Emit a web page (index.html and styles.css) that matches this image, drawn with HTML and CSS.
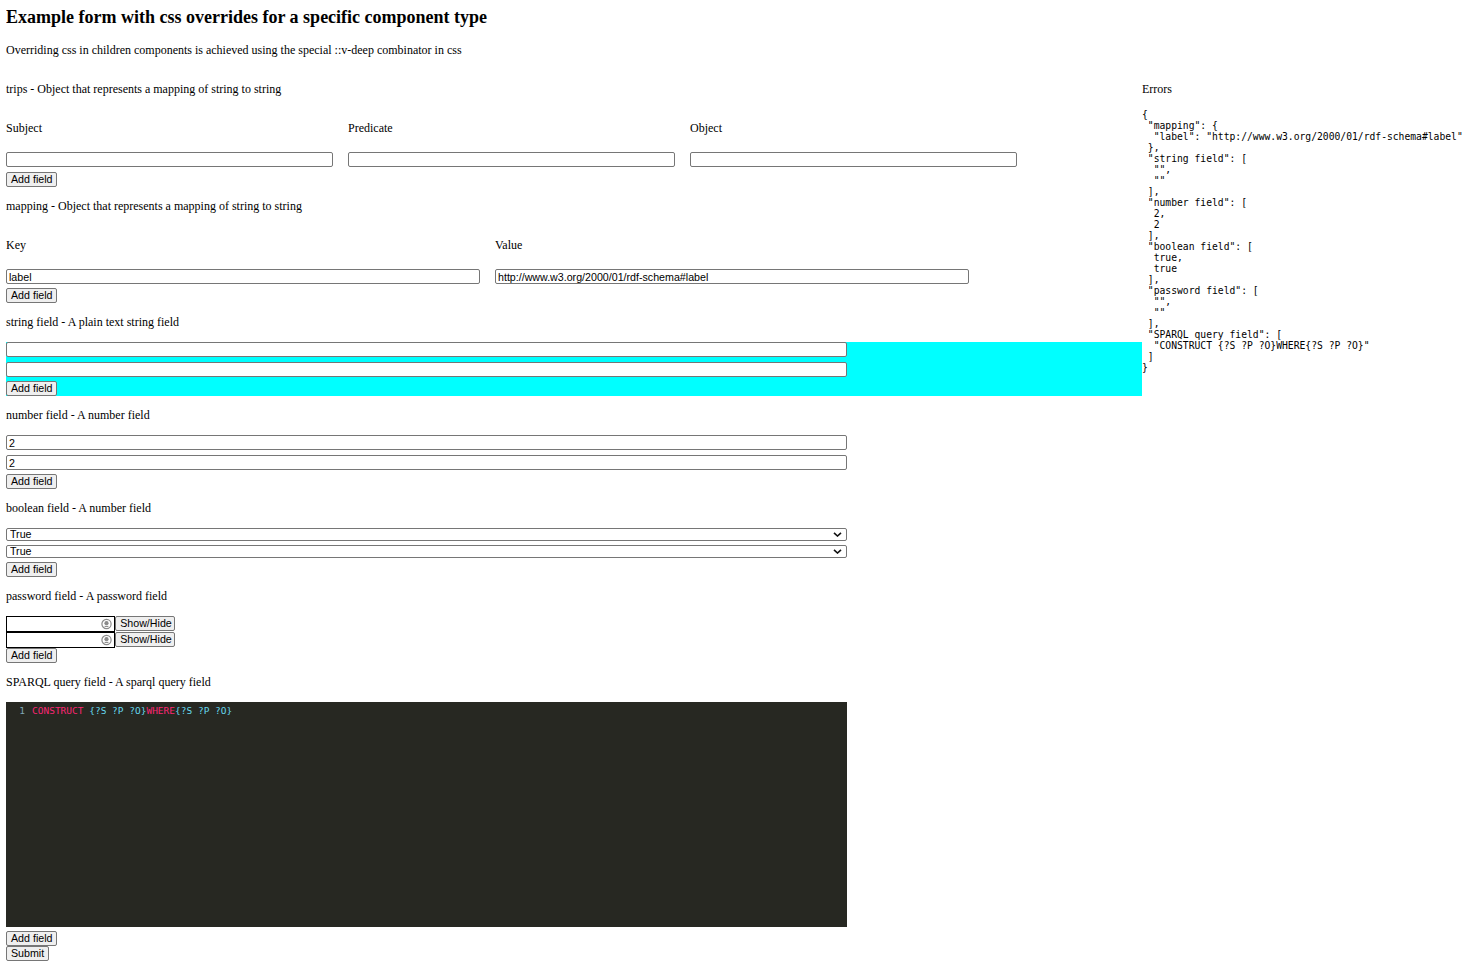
FILE: index.html
```html
<!DOCTYPE html>
<html lang="en">
<head>
<meta charset="utf-8">
<title>Example form</title>
<link rel="stylesheet" href="styles.css">
</head>
<body>
<h2 class="title">Example form with css overrides for a specific component type</h2>
<p class="intro">Overriding css in children components is achieved using the special ::v-deep combinator in css</p>
<div class="layout">
  <form class="form">
    <section class="field">
      <p class="label">trips - Object that represents a mapping of string to string</p>
      <div class="cols cols-3">
        <div class="col"><p class="col-label">Subject</p><input class="input" type="text"></div>
        <div class="col"><p class="col-label">Predicate</p><input class="input" type="text"></div>
        <div class="col"><p class="col-label">Object</p><input class="input" type="text"></div>
      </div>
      <button type="button" class="btn btn-after-cols">Add field</button>
    </section>

    <section class="field">
      <p class="label">mapping - Object that represents a mapping of string to string</p>
      <div class="cols cols-2">
        <div class="col"><p class="col-label">Key</p><input class="input" type="text" value="label"></div>
        <div class="col"><p class="col-label">Value</p><input class="input" type="text" value="http://www.w3.org/2000/01/rdf-schema#label"></div>
      </div>
      <button type="button" class="btn">Add field</button>
    </section>

    <section class="field">
      <p class="label">string field - A plain text string field</p>
      <div class="highlight">
        <div class="stack">
          <input class="input" type="text">
          <input class="input" type="text">
        </div>
        <button type="button" class="btn">Add field</button>
      </div>
    </section>

    <section class="field">
      <p class="label">number field - A number field</p>
      <div class="stack">
        <input class="input" type="text" value="2">
        <input class="input" type="text" value="2">
      </div>
      <button type="button" class="btn">Add field</button>
    </section>

    <section class="field">
      <p class="label">boolean field - A number field</p>
      <div class="stack stack-select">
        <div class="select-wrap">
          <select class="select"><option>True</option><option>False</option></select>
          <svg class="chevron" width="9" height="5" viewBox="0 0 9 5"><path d="M1 0.8 L4.5 4 L8 0.8" fill="none" stroke="#111" stroke-width="1.6"/></svg>
        </div>
        <div class="select-wrap">
          <select class="select"><option>True</option><option>False</option></select>
          <svg class="chevron" width="9" height="5" viewBox="0 0 9 5"><path d="M1 0.8 L4.5 4 L8 0.8" fill="none" stroke="#111" stroke-width="1.6"/></svg>
        </div>
      </div>
      <button type="button" class="btn">Add field</button>
    </section>

    <section class="field">
      <p class="label">password field - A password field</p>
      <div class="pw-list">
        <div class="pw-row">
          <div class="pw-box">
            <input class="pw-input" type="password">
            <svg class="reveal" width="11" height="12" viewBox="0 0 11 12"><circle cx="5.5" cy="6" r="4.6" fill="none" stroke="#8a8a8a" stroke-width="1.2"/><circle cx="5.5" cy="5.2" r="2.1" fill="#8a8a8a"/><path d="M3.6 8.4 H7.4" stroke="#8a8a8a" stroke-width="1.1"/></svg>
          </div>
          <button type="button" class="btn btn-inline">Show/Hide</button>
        </div>
        <div class="pw-row">
          <div class="pw-box">
            <input class="pw-input" type="password">
            <svg class="reveal" width="11" height="12" viewBox="0 0 11 12"><circle cx="5.5" cy="6" r="4.6" fill="none" stroke="#8a8a8a" stroke-width="1.2"/><circle cx="5.5" cy="5.2" r="2.1" fill="#8a8a8a"/><path d="M3.6 8.4 H7.4" stroke="#8a8a8a" stroke-width="1.1"/></svg>
          </div>
          <button type="button" class="btn btn-inline">Show/Hide</button>
        </div>
      </div>
      <button type="button" class="btn btn-flush">Add field</button>
    </section>

    <section class="field">
      <p class="label">SPARQL query field - A sparql query field</p>
      <div class="editor">
        <div class="gutter">1</div>
        <div class="code"><span class="kw">CONSTRUCT</span> <span class="var">{?S ?P ?O}</span><span class="kw">WHERE</span><span class="var">{?S ?P ?O}</span></div>
      </div>
      <button type="button" class="btn">Add field</button>
      <button type="submit" class="btn btn-flush">Submit</button>
    </section>
  </form>

  <aside class="side">
    <p class="label">Errors</p>
    <pre class="errors">{
 "mapping": {
  "label": "http://www.w3.org/2000/01/rdf-schema#label"
 },
 "string field": [
  "",
  ""
 ],
 "number field": [
  2,
  2
 ],
 "boolean field": [
  true,
  true
 ],
 "password field": [
  "",
  ""
 ],
 "SPARQL query field": [
  "CONSTRUCT {?S ?P ?O}WHERE{?S ?P ?O}"
 ]
}</pre>
  </aside>
</div>
</body>
</html>
```

FILE: styles.css
```css
* {
  box-sizing: border-box;
}

html {
  background: #fff;
}

body {
  margin: 6px 6px 0;
  font-family: "Liberation Serif", "Times New Roman", serif;
  font-size: 12px;
  color: #000;
}

.title {
  font-size: 18px;
  font-weight: bold;
  line-height: 22px;
  margin: 0 0 15px;
}

.intro {
  margin: 0 0 12px;
  line-height: 15px;
}

.layout {
  display: flex;
  align-items: flex-start;
}

.form {
  width: 1136px;
  flex: none;
}

.side {
  flex: 1;
  min-width: 0;
}

.label {
  margin: 12px 0;
  line-height: 15px;
}

.cols {
  display: flex;
  gap: 15px;
}

.col {
  display: flex;
  flex-direction: column;
}

.cols-3 .col {
  width: 327px;
}

.cols-2 .col {
  width: 474px;
}

.col-label {
  margin: 12px 0 16px;
  line-height: 15px;
}

.input {
  display: block;
  width: 100%;
  height: 15px;
  margin: 0;
  padding: 0 2px;
  border: 1px solid #767676;
  border-radius: 2px;
  background: #fff;
  color: #000;
  font-family: "Liberation Sans", Arial, sans-serif;
  font-size: 10.67px;
}

.stack {
  display: flex;
  flex-direction: column;
  gap: 5px;
  width: 841px;
}

.stack-select {
  gap: 4px;
}

.highlight {
  background: #00ffff;
}

.btn {
  display: block;
  height: 15px;
  margin: 4px 0 0;
  padding: 0 4px;
  border: 1px solid #767676;
  border-radius: 2px;
  background: #efefef;
  color: #000;
  font-family: "Liberation Sans", Arial, sans-serif;
  font-size: 10.67px;
  line-height: 13px;
}

.btn-after-cols {
  margin-top: 5px;
}

.btn-flush {
  margin-top: 0;
}

.btn-inline {
  margin: 0;
  width: 60px;
  padding: 0 0 0 2px;
  text-align: center;
}

.select-wrap {
  position: relative;
  width: 841px;
  height: 13px;
}

.select {
  appearance: none;
  -webkit-appearance: none;
  display: block;
  width: 100%;
  height: 13px;
  margin: 0;
  padding: 0 0 0 3px;
  border: 1px solid #767676;
  border-radius: 2px;
  background: #fff;
  color: #000;
  font-family: "Liberation Sans", Arial, sans-serif;
  font-size: 10.67px;
  line-height: 11px;
}

.chevron {
  position: absolute;
  right: 5px;
  top: 4px;
  pointer-events: none;
}

.pw-list {
  display: flex;
  flex-direction: column;
}

.pw-row {
  display: flex;
  align-items: flex-start;
  height: 16px;
}

.pw-box {
  position: relative;
  width: 109px;
  height: 16px;
}

.pw-input {
  display: block;
  width: 100%;
  height: 16px;
  margin: 0;
  padding: 0 14px 0 2px;
  border: 1px solid #000;
  border-radius: 0;
  background: #fff;
  font-family: "Liberation Sans", Arial, sans-serif;
  font-size: 10.67px;
}

.reveal {
  position: absolute;
  left: 95px;
  top: 2px;
  pointer-events: none;
}

.editor {
  display: flex;
  width: 841px;
  height: 225px;
  padding-top: 3px;
  background: #272822;
  font-family: "DejaVu Sans Mono", monospace;
  font-size: 9.5px;
  line-height: 11px;
}

.gutter {
  width: 20px;
  padding-right: 1px;
  text-align: right;
  color: #7fa7b5;
}

.code {
  margin-left: 6px;
  white-space: pre;
}

.kw {
  color: #f92672;
}

.var {
  color: #66d9ef;
}

.errors {
  margin: 0;
  font-family: "DejaVu Sans Mono", monospace;
  font-size: 9.7px;
  line-height: 11px;
  color: #000;
}
```
